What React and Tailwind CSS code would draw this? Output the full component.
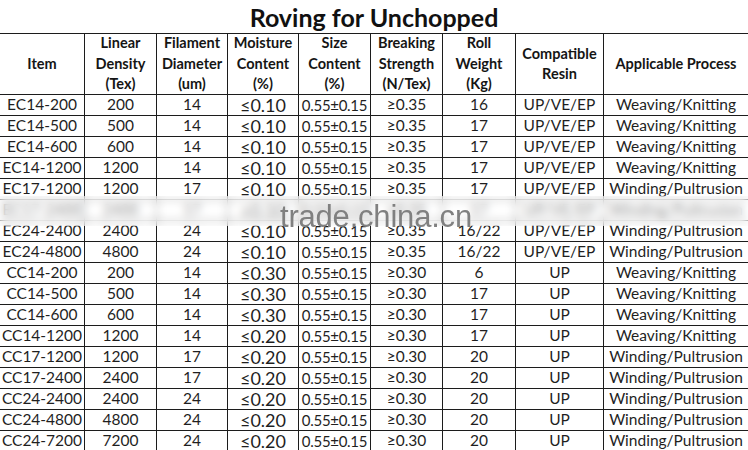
const headers = [
  ["Item"],
  ["Linear", "Density", "(Tex)"],
  ["Filament", "Diameter", "(um)"],
  ["Moisture", "Content", "(%)"],
  ["Size", "Content", "(%)"],
  ["Breaking", "Strength", "(N/Tex)"],
  ["Roll", "Weight", "(Kg)"],
  ["Compatible", "Resin"],
  ["Applicable Process"],
];

const rows = [
  ["EC14-200", "200", "14", "≤0.10", "0.55±0.15", "≥0.35", "16", "UP/VE/EP", "Weaving/Knitting"],
  ["EC14-500", "500", "14", "≤0.10", "0.55±0.15", "≥0.35", "17", "UP/VE/EP", "Weaving/Knitting"],
  ["EC14-600", "600", "14", "≤0.10", "0.55±0.15", "≥0.35", "17", "UP/VE/EP", "Weaving/Knitting"],
  ["EC14-1200", "1200", "14", "≤0.10", "0.55±0.15", "≥0.35", "17", "UP/VE/EP", "Weaving/Knitting"],
  ["EC17-1200", "1200", "17", "≤0.10", "0.55±0.15", "≥0.35", "17", "UP/VE/EP", "Winding/Pultrusion"],
  ["EC17-2400", "2400", "17", "≤0.10", "0.55±0.15", "≥0.35", "17", "UP/VE/EP", "Winding/Pultrusion"],
  ["EC24-2400", "2400", "24", "≤0.10", "0.55±0.15", "≥0.35", "16/22", "UP/VE/EP", "Winding/Pultrusion"],
  ["EC24-4800", "4800", "24", "≤0.10", "0.55±0.15", "≥0.35", "16/22", "UP/VE/EP", "Winding/Pultrusion"],
  ["CC14-200", "200", "14", "≤0.30", "0.55±0.15", "≥0.30", "6", "UP", "Weaving/Knitting"],
  ["CC14-500", "500", "14", "≤0.30", "0.55±0.15", "≥0.30", "17", "UP", "Weaving/Knitting"],
  ["CC14-600", "600", "14", "≤0.30", "0.55±0.15", "≥0.30", "17", "UP", "Weaving/Knitting"],
  ["CC14-1200", "1200", "14", "≤0.20", "0.55±0.15", "≥0.30", "17", "UP", "Weaving/Knitting"],
  ["CC17-1200", "1200", "17", "≤0.20", "0.55±0.15", "≥0.30", "20", "UP", "Winding/Pultrusion"],
  ["CC17-2400", "2400", "17", "≤0.20", "0.55±0.15", "≥0.30", "20", "UP", "Winding/Pultrusion"],
  ["CC24-2400", "2400", "24", "≤0.20", "0.55±0.15", "≥0.30", "20", "UP", "Winding/Pultrusion"],
  ["CC24-4800", "4800", "24", "≤0.20", "0.55±0.15", "≥0.30", "20", "UP", "Winding/Pultrusion"],
  ["CC24-7200", "7200", "24", "≤0.20", "0.55±0.15", "≥0.30", "20", "UP", "Winding/Pultrusion"],
];

const grid = "grid grid-cols-[85px_72px_71px_71px_72px_72px_73px_88px_1fr]";

function Cell({ children, last, className = "" }) {
  return (
    <div
      className={`flex items-center justify-center overflow-hidden whitespace-nowrap ${
        last ? "" : "border-r border-[#1c1c1c]"
      } ${className}`}
    >
      {children}
    </div>
  );
}

export default function App() {
  return (
    <div className="relative w-[748px] h-[450px] overflow-hidden bg-white text-[#1f1f1f] font-['Lato','Open_Sans',sans-serif]">
      {/* title */}
      <div className="h-[33px] flex items-center justify-center">
        <h1 className="text-[25px] font-bold leading-none text-[#111] pt-[2px]">Roving for Unchopped</h1>
      </div>

      {/* header */}
      <div className={`${grid} h-[62px] border-y border-[#1c1c1c]`}>
        {headers.map((h, i) => (
          <Cell key={i} last={i === headers.length - 1} className="flex-col text-[14.5px] font-bold leading-[20.5px] text-[#151515]">
            {h.map((line) => (
              <span key={line}>{line}</span>
            ))}
          </Cell>
        ))}
      </div>

      {/* body */}
      {rows.map((r) => (
        <div key={r[0]} className={`${grid} h-[21px] border-b border-[#1c1c1c]`}>
          {r.map((v, i) => (
            <Cell
              key={i}
              last={i === r.length - 1}
              className={
                i === 3
                  ? "text-[18px] leading-none"
                  : i === 4
                  ? "text-[15px] leading-none tracking-[-0.3px]"
                  : "text-[15.5px] leading-none"
              }
            >
              {v}
            </Cell>
          ))}
        </div>
      ))}

      {/* smudged watermark band */}
      <div className="absolute left-0 right-0 top-[196px] h-[30px] backdrop-blur-[4px] bg-white/45" />
      <div className="absolute left-[280px] top-[201px] text-[31px] leading-none text-[#808080] font-['Liberation_Sans',Arial,sans-serif] tracking-[-0.2px]">
        trade.china.cn
      </div>
    </div>
  );
}
